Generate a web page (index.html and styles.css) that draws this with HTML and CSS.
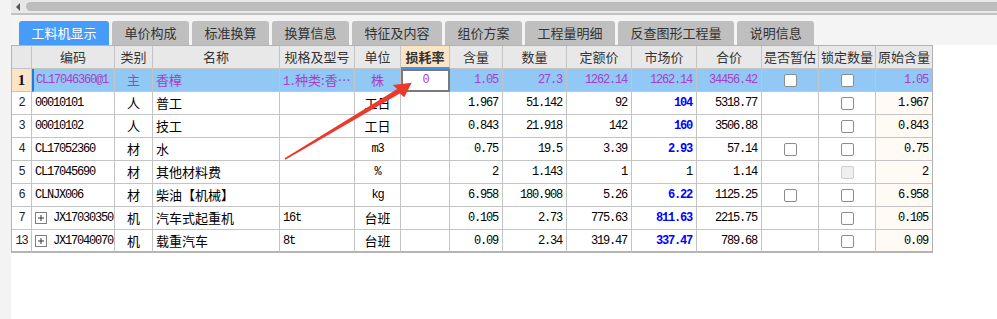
FILE: index.html
```html
<!DOCTYPE html>
<html lang="zh">
<head>
<meta charset="utf-8">
<title>工料机显示</title>
<link rel="stylesheet" href="styles.css">
</head>
<body>
<div class="side"></div>
<div class="main">
  <div class="scroll">
    <span class="sarrow"></span>
    <span class="thumb"></span>
  </div>
  <div class="sline"></div>
  <div class="tabbar">
    <div class="tab active">工料机显示</div>
    <div class="tab">单价构成</div>
    <div class="tab">标准换算</div>
    <div class="tab">换算信息</div>
    <div class="tab">特征及内容</div>
    <div class="tab">组价方案</div>
    <div class="tab">工程量明细</div>
    <div class="tab">反查图形工程量</div>
    <div class="tab">说明信息</div>
  </div>
  <div class="grid">
    <div class="h"></div>
    <div class="h">编码</div>
    <div class="h">类别</div>
    <div class="h">名称</div>
    <div class="h">规格及型号</div>
    <div class="h">单位</div>
    <div class="h hl">损耗率</div>
    <div class="h">含量</div>
    <div class="h">数量</div>
    <div class="h">定额价</div>
    <div class="h">市场价</div>
    <div class="h">合价</div>
    <div class="h">是否暂估</div>
    <div class="h">锁定数量</div>
    <div class="h">原始含量</div>

    <div class="c rn rnsel">1</div>
    <div class="c sel code mark m">CL17046360@1</div>
    <div class="c sel ctr">主</div>
    <div class="c sel lft">香樟</div>
    <div class="c sel lft"><span class="m">1.</span>种类:香…</div>
    <div class="c sel ctr">株</div>
    <div class="c edit m">0</div>
    <div class="c sel num m">1.05</div>
    <div class="c sel num m">27.3</div>
    <div class="c sel num m">1262.14</div>
    <div class="c sel num m">1262.14</div>
    <div class="c sel num m">34456.42</div>
    <div class="c sel ctr"><span class="cb"></span></div>
    <div class="c sel ctr"><span class="cb"></span></div>
    <div class="c sel num m">1.05</div>

    <div class="c rn m">2</div>
    <div class="c code m">00010101</div>
    <div class="c ctr">人</div>
    <div class="c lft">普工</div>
    <div class="c"></div>
    <div class="c ctr">工日</div>
    <div class="c"></div>
    <div class="c num m">1.967</div>
    <div class="c num m">51.142</div>
    <div class="c num m">92</div>
    <div class="c num m b">104</div>
    <div class="c num m">5318.77</div>
    <div class="c"></div>
    <div class="c ctr"><span class="cb"></span></div>
    <div class="c num m orig">1.967</div>

    <div class="c rn m">3</div>
    <div class="c code m">00010102</div>
    <div class="c ctr">人</div>
    <div class="c lft">技工</div>
    <div class="c"></div>
    <div class="c ctr">工日</div>
    <div class="c"></div>
    <div class="c num m">0.843</div>
    <div class="c num m">21.918</div>
    <div class="c num m">142</div>
    <div class="c num m b">160</div>
    <div class="c num m">3506.88</div>
    <div class="c"></div>
    <div class="c ctr"><span class="cb"></span></div>
    <div class="c num m orig">0.843</div>

    <div class="c rn m">4</div>
    <div class="c code m">CL17052360</div>
    <div class="c ctr">材</div>
    <div class="c lft">水</div>
    <div class="c"></div>
    <div class="c ctr m">m3</div>
    <div class="c"></div>
    <div class="c num m">0.75</div>
    <div class="c num m">19.5</div>
    <div class="c num m">3.39</div>
    <div class="c num m b">2.93</div>
    <div class="c num m">57.14</div>
    <div class="c ctr"><span class="cb"></span></div>
    <div class="c ctr"><span class="cb"></span></div>
    <div class="c num m orig">0.75</div>

    <div class="c rn m">5</div>
    <div class="c code m">CL17045690</div>
    <div class="c ctr">材</div>
    <div class="c lft">其他材料费</div>
    <div class="c"></div>
    <div class="c ctr m">%</div>
    <div class="c"></div>
    <div class="c num m">2</div>
    <div class="c num m">1.143</div>
    <div class="c num m">1</div>
    <div class="c num m">1</div>
    <div class="c num m">1.14</div>
    <div class="c"></div>
    <div class="c ctr"><span class="cb dis"></span></div>
    <div class="c num m orig">2</div>

    <div class="c rn m">6</div>
    <div class="c code m">CLNJX006</div>
    <div class="c ctr">材</div>
    <div class="c lft">柴油【机械】</div>
    <div class="c"></div>
    <div class="c ctr m">kg</div>
    <div class="c"></div>
    <div class="c num m">6.958</div>
    <div class="c num m">180.908</div>
    <div class="c num m">5.26</div>
    <div class="c num m b">6.22</div>
    <div class="c num m">1125.25</div>
    <div class="c ctr"><span class="cb"></span></div>
    <div class="c ctr"><span class="cb"></span></div>
    <div class="c num m orig">6.958</div>

    <div class="c rn m">7</div>
    <div class="c code m"><svg class="plus" width="12" height="12" viewBox="0 0 12 12"><rect x="0.5" y="0.5" width="11" height="11" fill="#fff" stroke="#808080"/><path d="M3 6H9M6 3V9" stroke="#333" stroke-width="1"/></svg>JX17030350</div>
    <div class="c ctr">机</div>
    <div class="c lft">汽车式起重机</div>
    <div class="c lft m">16t</div>
    <div class="c ctr">台班</div>
    <div class="c"></div>
    <div class="c num m">0.105</div>
    <div class="c num m">2.73</div>
    <div class="c num m">775.63</div>
    <div class="c num m b">811.63</div>
    <div class="c num m">2215.75</div>
    <div class="c"></div>
    <div class="c ctr"><span class="cb"></span></div>
    <div class="c num m orig">0.105</div>

    <div class="c rn m">13</div>
    <div class="c code m"><svg class="plus" width="12" height="12" viewBox="0 0 12 12"><rect x="0.5" y="0.5" width="11" height="11" fill="#fff" stroke="#808080"/><path d="M3 6H9M6 3V9" stroke="#333" stroke-width="1"/></svg>JX17040070</div>
    <div class="c ctr">机</div>
    <div class="c lft">载重汽车</div>
    <div class="c lft m">8t</div>
    <div class="c ctr">台班</div>
    <div class="c"></div>
    <div class="c num m">0.09</div>
    <div class="c num m">2.34</div>
    <div class="c num m">319.47</div>
    <div class="c num m b">337.47</div>
    <div class="c num m">789.68</div>
    <div class="c"></div>
    <div class="c ctr"><span class="cb"></span></div>
    <div class="c num m orig">0.09</div>
  </div>
</div>
<svg class="arrow" width="997" height="319" viewBox="0 0 997 319">
  <polygon fill="#ea3a2e" points="284.6,158.3 397.2,89.1 392.7,85 411.7,82.7 404.3,97.3 399.8,93.4 285.4,159.7"/>
</svg>
</body>
</html>
```
FILE: styles.css
```css
html, body {
  margin: 0;
  padding: 0;
  background: #ffffff;
}
body {
  display: flex;
  min-height: 319px;
  font-family: "Noto Sans CJK SC", "Microsoft YaHei", sans-serif;
  font-size: 13px;
  color: #000;
  position: relative;
}
.side {
  width: 11px;
  flex: none;
  background: #f3f3f3;
}
.main {
  flex: 1;
  display: flex;
  flex-direction: column;
  min-width: 0;
}
.scroll {
  height: 13px;
  background: #e8e8e8;
  display: flex;
  align-items: center;
}
.sarrow {
  width: 0;
  height: 0;
  margin-left: 5px;
  border-top: 4px solid transparent;
  border-bottom: 4px solid transparent;
  border-right: 4px solid #555;
}
.thumb {
  flex: 1;
  height: 9px;
  margin-left: 6px;
  background: #bdbdbd;
  border-radius: 5px 0 0 5px;
}
.sline {
  height: 2px;
  background: #c2c2c2;
}
.tabbar {
  height: 30px;
  box-sizing: border-box;
  background: #f4f4f4;
  padding: 6px 0 0 8px;
  display: flex;
  gap: 3px;
  align-items: flex-end;
}
.tab {
  height: 24px;
  line-height: 24px;
  padding: 0 12.5px;
  background: #bfbfbf;
  color: #333;
  font-size: 13px;
  border-radius: 3px 3px 0 0;
  white-space: nowrap;
}
.tab.active {
  background: #469cf8;
  color: #fff;
}
.grid {
  display: grid;
  grid-template-columns: 20px 83px 38px 127px 75px 46px 49px 53px 64px 65px 65px 65px 57px 57px 57px;
  grid-auto-rows: 23px;
  width: max-content;
  border-left: 1px solid #b4b4b4;
  border-top: 1px solid #b4b4b4;
}
.h, .c {
  box-sizing: border-box;
  border-right: 1px solid #c4c4c4;
  border-bottom: 1px solid #c4c4c4;
  height: 23px;
  line-height: 22px;
  white-space: nowrap;
  overflow: hidden;
}
.grid > :nth-child(15n) {
  border-right-color: #b0b0b0;
}
.grid > :nth-last-child(-n+15) {
  border-bottom: 2px solid #b4b4b4;
}
.h {
  background: #e8e8e8;
  color: #333;
  text-align: center;
  font-size: 13px;
}
.h.hl {
  background: #fce4c6;
  font-weight: bold;
  border-bottom: 2px solid #3e95ee;
}
.m {
  font-family: "Liberation Mono", "DejaVu Sans Mono", monospace;
  font-size: 12px;
  letter-spacing: -1.2px;
}
.code {
  padding-left: 3px;
  display: flex;
  align-items: center;
}
.lft {
  padding-left: 3px;
}
.ctr {
  text-align: center;
}
.ctr .cb {
  vertical-align: middle;
}
.num {
  text-align: right;
  padding-right: 4px;
}
.rn {
  text-align: center;
  color: #222;
}
.rnsel {
  background: #fce4c6;
  font-family: "Liberation Serif", serif;
  font-weight: bold;
  font-size: 15px;
  color: #111;
}
.sel {
  background: #92c8f6;
  color: #a83ec4;
}
.mark {
  border-left: 2px solid #1d7ae0;
  padding-left: 2px;
}
.edit {
  background: #fff;
  color: #a83ec4;
  text-align: center;
  border: 2px solid #7a7a7a;
  line-height: 19px;
}
.b {
  color: #0000ff;
  font-weight: bold;
}
.orig {
  background: #fffaf4;
}
.cb {
  display: inline-block;
  width: 13px;
  height: 13px;
  box-sizing: border-box;
  border: 1px solid #8c8c8c;
  border-radius: 2px;
  background: #fff;
  position: relative;
  top: -1px;
}
.cb.dis {
  background: #efefef;
  border-color: #cdcdcd;
}
.plus {
  flex: none;
  margin-right: 6px;
}
.arrow {
  position: absolute;
  top: 0;
  left: 0;
  pointer-events: none;
}
```
